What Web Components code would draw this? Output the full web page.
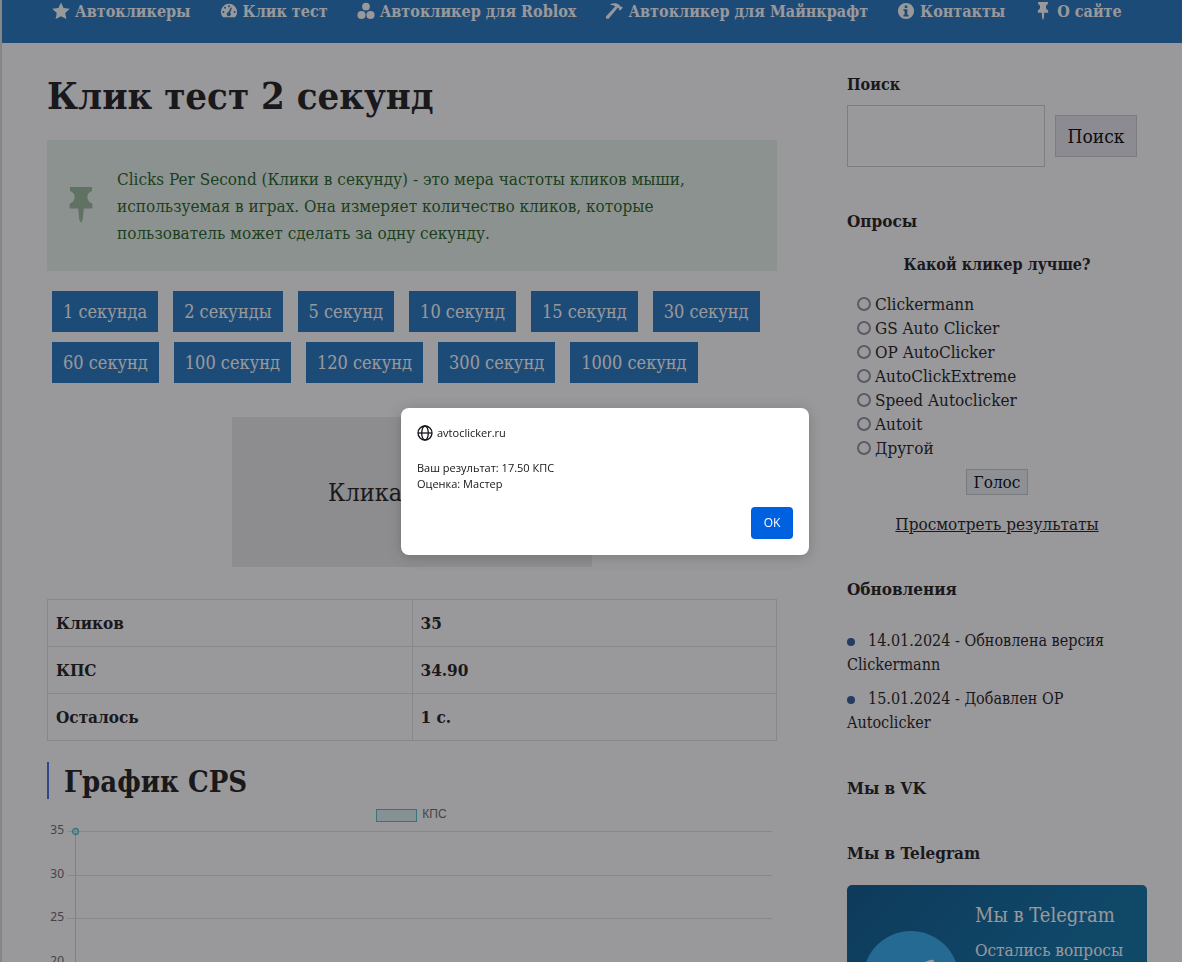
<!DOCTYPE html>
<html lang="ru">
<head>
<meta charset="utf-8">
<title>Клик тест 2 секунд</title>
<style>
body {
  margin: 0;
  height: 100vh;
  overflow: hidden;
  background: #fff;
  color: #161616;
  font: 17px/24px "DejaVu Serif Condensed", "DejaVu Serif", serif;
}
</style>
</head>
<body>
<click-page>
  <site-nav slot="nav">
    <nav-link icon="star">Автокликеры</nav-link>
    <nav-link icon="gauge">Клик тест</nav-link>
    <nav-link icon="circles">Автокликер для Roblox</nav-link>
    <nav-link icon="hammer">Автокликер для Майнкрафт</nav-link>
    <nav-link icon="info">Контакты</nav-link>
    <nav-link icon="pin">О сайте</nav-link>
  </site-nav>

  <page-heading>Клик тест 2 секунд</page-heading>
  <info-note>Clicks Per Second (Клики в секунду) - это мера частоты кликов мыши, используемая в играх. Она измеряет количество кликов, которые пользователь может сделать за одну секунду.</info-note>
  <duration-list></duration-list>
  <click-area>Кликай</click-area>
  <result-table></result-table>
  <section-heading>График CPS</section-heading>
  <cps-chart></cps-chart>

  <search-form slot="side"></search-form>
  <side-widget slot="side" heading="Опросы"><poll-form></poll-form></side-widget>
  <side-widget slot="side" heading="Обновления"><update-list></update-list></side-widget>
  <side-widget slot="side" heading="Мы в VK"></side-widget>
  <side-widget slot="side" heading="Мы в Telegram"><telegram-card></telegram-card></side-widget>
</click-page>
<alert-dialog>
  <span slot="origin">avtoclicker.ru</span>
  <span>Ваш результат: 17.50 КПС<br>Оценка: Мастер</span>
</alert-dialog>

<script>
const PIN = '<path d="M4.500 0h11v2.200c-1.500.6-2.300 1.700-2.300 3.300s.8 3 2.500 3.800V12H4.300V9.300C6 8.500 6.800 7.100 6.800 5.500S6 2.800 4.500 2.200zM8.600 12h2.800l-.5 6-.9 2-.9-2z"/>';
const ICONS = {
  star: '<path d="M10 .5l2.900 6.200 6.800.8-5 4.700 1.300 6.800-6-3.300-6 3.300 1.300-6.800-5-4.700 6.800-.8z"/>',
  gauge: '<path fill-rule="evenodd" d="M10 2a9 9 0 0 1 9 9c0 2.600-1 4.600-2.400 6H3.400A8.600 8.600 0 0 1 1 11a9 9 0 0 1 9-9zM10 3.600a1.100 1.100 0 1 0 0 2.200 1.100 1.100 0 0 0 0-2.200zM5.600 5.400a1.100 1.100 0 1 0 0 2.200 1.100 1.100 0 0 0 0-2.200zM3.800 9.900a1.100 1.100 0 1 0 0 2.200 1.100 1.100 0 0 0 0-2.200zM16.200 9.900a1.100 1.100 0 1 0 0 2.200 1.100 1.100 0 0 0 0-2.200zM12 6l-2.700 5.400a2.200 2.200 0 1 0 2 .6L13.300 6.400z"/>',
  circles: '<circle cx="10" cy="5" r="4.300"/><circle cx="5" cy="14.500" r="4.500"/><circle cx="15" cy="14.500" r="4.500"/>',
  hammer: '<path d="M6 2.400C9 .8 13.500.8 16 3.400l1.200 1.900 1.300-.3 1.300 1.500-3 3-1.500-1.300.1-1.300-1.100-.8L4.200 18.200c-1.800 1.600-4.300-.8-2.700-2.600L11.400 4.900C10 3.500 8.500 3.200 6 3.200z"/>',
  info: '<path fill-rule="evenodd" d="M10 1a9 9 0 1 1 0 18 9 9 0 0 1 0-18zM8.600 3.800v2.800h2.900V3.800zM7.200 8v1.900h1.200v4.400H7.200V16h5.600v-1.700h-1.300V8z"/>',
  pin: PIN
};
const icon = (name, size) => `<svg viewBox="0 0 20 20" width="${size}" height="${size}" fill="currentColor" aria-hidden="true">${ICONS[name]}</svg>`;

function element(name, render) {
  customElements.define(name, class extends HTMLElement {
    constructor() {
      super();
      this.attachShadow({ mode: 'open' });
    }
    connectedCallback() {
      const t = document.createElement('template');
      t.innerHTML = render(this);
      this.shadowRoot.replaceChildren(t.content.cloneNode(true));
    }
  });
}

element('click-page', () => `
<style>
:host { display: block; border-left: 2px solid #ddd; }
.columns { display: flex; gap: 70px; padding: 30px 35px 0 45px; }
main { flex: 1; min-width: 0; }
aside { width: 300px; display: flex; flex-direction: column; gap: 41px; }
</style>
<slot name="nav"></slot>
<div class="columns">
  <main><slot></slot></main>
  <aside><slot name="side"></slot></aside>
</div>`);

element('site-nav', () => `
<style>
:host { display: block; background: #1e73be; color: #fff; }
nav { display: flex; gap: 29px; padding: 0 50px 19px; }
</style>
<nav><slot></slot></nav>`);

element('nav-link', el => `
<style>
:host { display: block; }
a { display: flex; align-items: center; gap: 5px; color: inherit; text-decoration: none; font-size: 16px; font-weight: 700; white-space: nowrap; }
svg { flex: none; margin-bottom: 2px; }
</style>
<a href="#">${icon(el.getAttribute('icon'), 18)}<slot></slot></a>`);

element('page-heading', () => `
<style>
:host { display: block; }
h1 { margin: 0 0 21px; font-size: 38px; line-height: 46px; }
</style>
<h1><slot></slot></h1>`);

element('section-heading', () => `
<style>
:host { display: block; margin-top: 21px; }
h2 { margin: 0; border-left: 2px solid #4169e1; padding: 3px 0 0 15px; font-size: 29px; line-height: 34px; }
</style>
<h2><slot></slot></h2>`);

element('info-note', () => `
<style>
:host { display: flex; align-items: center; gap: 16px; padding: 26px 70px 24px 14px; background: #e8f5e9; color: #1b5e20; line-height: 27px; }
svg { flex: none; color: #98bb9b; margin-bottom: 4px; }
</style>
<svg viewBox="0 0 20 20" width="40" height="36" preserveAspectRatio="none" fill="currentColor" aria-hidden="true">${PIN}</svg>
<span><slot></slot></span>`);

element('duration-list', () => `
<style>
:host { display: flex; flex-wrap: wrap; gap: 10px 15px; margin: 20px 5px 0; }
a { padding: 8px 11px; background: #1e73be; color: #fff; font-size: 18px; line-height: 25px; text-decoration: none; white-space: nowrap; }
</style>
${['1 секунда', '2 секунды', '5 секунд', '10 секунд', '15 секунд', '30 секунд', '60 секунд', '100 секунд', '120 секунд', '300 секунд', '1000 секунд'].map(t => `<a href="#">${t}</a>`).join('')}`);

element('click-area', () => `
<style>
:host { display: flex; justify-content: center; margin-top: 34px; }
button { width: 360px; height: 150px; border: 0; padding: 2px 96px 0; background: #eaeaea; color: inherit; font: inherit; font-size: 25px; text-align: left; }
</style>
<button type="button"><slot></slot></button>`);

element('result-table', () => `
<style>
:host { display: block; margin-top: 32px; }
table { width: 100%; table-layout: fixed; border-collapse: collapse; }
th, td { border: 1px solid #e0e0e4; padding: 11px 8px; text-align: left; font-size: 17px; font-weight: 700; }
</style>
<table>
  <tr><th scope="row">Кликов</th><td>35</td></tr>
  <tr><th scope="row">КПС</th><td>34.90</td></tr>
  <tr><th scope="row">Осталось</th><td>1 с.</td></tr>
</table>`);

element('cps-chart', () => `
<style>
:host { display: block; margin-right: 5px; color: #666; font: 12px/16px "Liberation Sans", sans-serif; }
.legend { display: flex; align-items: center; justify-content: center; gap: 5px; padding: 7px 0 1px 4px; }
.swatch { box-sizing: border-box; width: 41px; height: 13px; border: 1px solid #4bc0c0; background: #dbf2f2; margin-top: 2px; }
.plot { display: grid; grid-template-columns: 17px 1fr; gap: 0 3px; }
.plot span { height: 43px; line-height: 14px; text-align: right; font-family: "Noto Sans", sans-serif; }
.row { position: relative; height: 44px; padding-top: 8px; box-sizing: border-box; }
.row::before { content: ""; display: block; height: 100%; border-top: 1px solid #e0e0e0; box-sizing: border-box; }
.row::after { content: ""; position: absolute; left: 8px; top: 8px; height: 44px; border-left: 1px solid #d4d4d4; }
.row:nth-of-type(even) { margin-bottom: -1px; }
svg { position: absolute; left: 4px; top: 4px; z-index: 1; }
</style>
<div class="legend"><div class="swatch"></div>КПС</div>
<div class="plot">
  <span>35</span><div class="row"><svg width="9" height="9" viewBox="0 0 9 9"><circle cx="4.500" cy="4.500" r="3" fill="#4bc0c0" fill-opacity=".2" stroke="#4bc0c0" stroke-width="1.300"/></svg></div>
  <span>30</span><div class="row"></div>
  <span>25</span><div class="row"></div>
  <span>20</span><div class="row"></div>
</div>`);

element('search-form', () => `
<style>
:host { display: block; margin-bottom: 1px; }
label { display: block; margin-bottom: 8px; font-size: 16px; font-weight: 700; }
form { display: flex; align-items: center; gap: 10px; margin-right: 10px; }
input { flex: 1; min-width: 0; height: 62px; box-sizing: border-box; border: 1px solid #ccccd0; background: #fff; font: inherit; padding: 0 15px; }
button { height: 42px; width: 82px; border: 1px solid #ccc; background: #e8e7ee; color: #000; font: inherit; font-size: 19px; padding: 0; }
</style>
<label for="q">Поиск</label>
<form><input id="q" type="search"><button type="button">Поиск</button></form>`);

element('side-widget', el => `
<style>
:host { display: block; }
h2 { margin: 0; font-size: 17px; line-height: 24px; }
</style>
<h2>${el.getAttribute('heading')}</h2><slot></slot>`);

element('poll-form', () => `
<style>
:host { display: block; margin-top: 20px; }
form { display: flex; flex-direction: column; align-items: center; }
strong { font-size: 16px; }
ul { align-self: stretch; list-style: none; margin: 15px 10px 9px; padding: 0; }
label { display: flex; align-items: center; gap: 4px; }
input { appearance: none; box-sizing: border-box; width: 14px; height: 14px; margin: 0; border: 2px solid #8f8f9d; border-radius: 50%; background: #fff; }
button { height: 26px; padding: 0 7px; border: 1px solid #c8c8c8; background: #e9f3f6; color: #000; font: inherit; line-height: 24px; margin-bottom: 17px; }
a { color: inherit; }
</style>
<form>
  <strong>Какой кликер лучше?</strong>
  <ul>${['Clickermann', 'GS Auto Clicker', 'OP AutoClicker', 'AutoClickExtreme', 'Speed Autoclicker', 'Autoit', 'Другой'].map(t => `<li><label><input type="radio" name="poll">${t}</label></li>`).join('')}</ul>
  <button type="button">Голос</button>
  <a href="#">Просмотреть результаты</a>
</form>`);

element('update-list', () => `
<style>
:host { display: block; margin-top: 28px; font-size: 16px; }
ul { list-style: none; margin: 0; padding: 0; display: grid; gap: 10px; }
li::before { content: ""; display: inline-block; width: 8px; height: 8px; border-radius: 50%; background: #2b5797; margin-right: 13px; }
</style>
<ul><li>14.01.2024 - Обновлена версия Clickermann</li><li>15.01.2024 - Добавлен OP Autoclicker</li></ul>`);

element('telegram-card', () => `
<style>
:host { display: flex; gap: 16px; margin-top: 20px; padding: 18px 16px; border-radius: 5px; background: linear-gradient(135deg, #03558b, #066da3 60%); color: #fff; }
svg { flex: none; margin-top: 28px; }
h3 { margin: 0 0 11px; font-size: 20px; font-weight: 400; line-height: 24px; }
p { margin: 0; font-size: 17px; white-space: nowrap; }
</style>
<svg width="96" height="96" viewBox="0 0 96 96" aria-hidden="true"><circle cx="48" cy="48" r="48" fill="#2aabee"/><path fill="#fff" d="M20 47l47-18c3-1 5 0 4 4l-8 38c-1 3-3 3-5 2L46 64l-6 6c-1 1-3 1-3-1l1-9 22-20-27 17-12-4c-3-1-3-4-1-6z"/></svg>
<div><h3>Мы в Telegram</h3><p>Остались вопросы</p></div>`);

element('alert-dialog', () => `
<style>
:host { position: fixed; inset: 0; display: flex; align-items: center; justify-content: center; padding-left: 28px; z-index: 10; background: rgba(28, 27, 34, .45); font: 11px/16px "Open Sans", "Noto Sans", sans-serif; color: #15141a; }
dialog { position: static; box-sizing: border-box; width: 408px; margin: 0; border: 0; padding: 17px 16px 16px; border-radius: 8px; background: #fff; color: inherit; box-shadow: 0 2px 14px rgba(0, 0, 0, .2); }
header { display: flex; align-items: center; gap: 4px; margin-bottom: 19px; font-weight: 500; }
p { margin: 0 0 15px; }
footer { display: flex; justify-content: flex-end; }
button { width: 42px; height: 32px; border: 0; border-radius: 4px; padding: 0; background: #0061e0; color: #fff; font: inherit; font-size: 12px; }
</style>
<dialog open aria-label="avtoclicker.ru">
  <header><svg width="16" height="16" viewBox="0 0 16 16" fill="none" stroke="#15141a" stroke-width="1.300" aria-hidden="true"><circle cx="8" cy="8" r="7"/><ellipse cx="8" cy="8" rx="3.300" ry="7"/><path d="M1 8h14"/></svg><slot name="origin"></slot></header>
  <p><slot></slot></p>
  <footer><button type="button">OK</button></footer>
</dialog>`);
</script>
</body>
</html>
